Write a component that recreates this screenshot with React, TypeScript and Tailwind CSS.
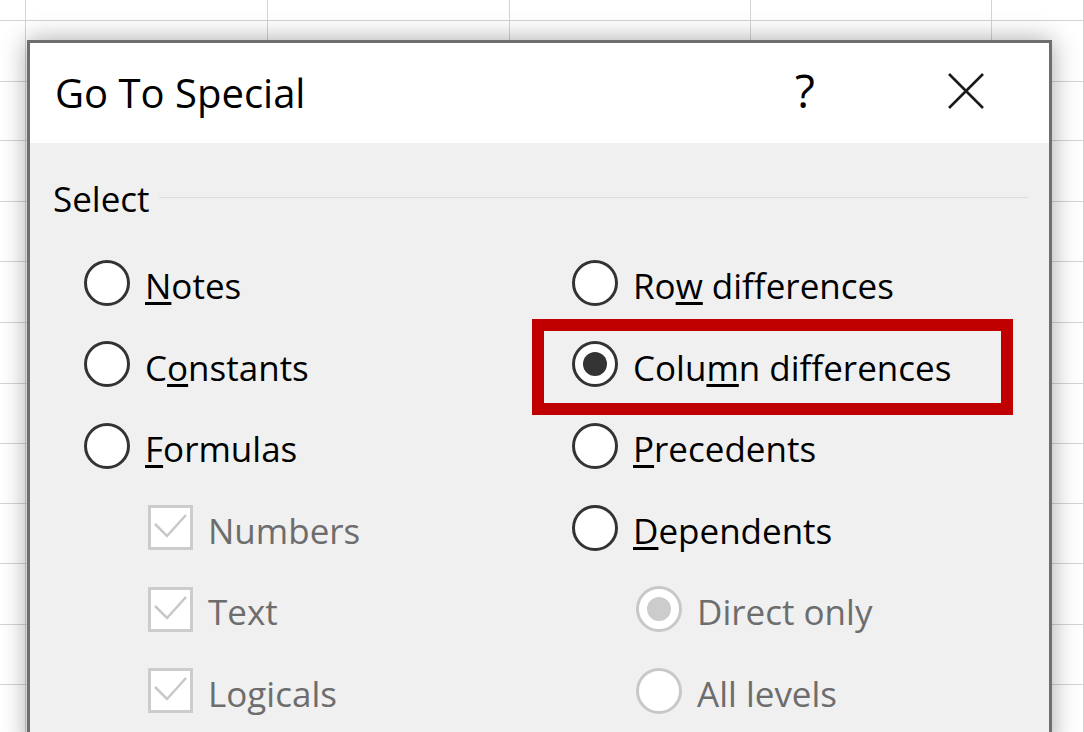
import clsx from 'clsx'

type Opt = {
  pre: string
  key?: string
  post?: string
  kind: 'radio' | 'check'
  checked?: boolean
  disabled?: boolean
  indent?: boolean
  marked?: boolean
}

const options: Opt[] = [
  { pre: '', key: 'N', post: 'otes', kind: 'radio' },
  { pre: 'Ro', key: 'w', post: ' differences', kind: 'radio' },
  { pre: 'C', key: 'o', post: 'nstants', kind: 'radio' },
  { pre: 'Colu', key: 'm', post: 'n differences', kind: 'radio', checked: true, marked: true },
  { pre: '', key: 'F', post: 'ormulas', kind: 'radio' },
  { pre: '', key: 'P', post: 'recedents', kind: 'radio' },
  { pre: 'Numbers', kind: 'check', checked: true, disabled: true, indent: true },
  { pre: '', key: 'D', post: 'ependents', kind: 'radio' },
  { pre: 'Text', kind: 'check', checked: true, disabled: true, indent: true },
  { pre: 'Direct only', kind: 'radio', checked: true, disabled: true, indent: true },
  { pre: 'Logicals', kind: 'check', checked: true, disabled: true, indent: true },
  { pre: 'All levels', kind: 'radio', disabled: true, indent: true },
]

function Radio({ checked, disabled }: { checked?: boolean; disabled?: boolean }) {
  return (
    <span
      className={clsx(
        'flex h-[46px] w-[46px] shrink-0 items-center justify-center rounded-full border-[3px] bg-white',
        disabled ? 'border-[#c8c8c8]' : 'border-[#333333]'
      )}
    >
      {checked && (
        <span className={clsx('h-[24px] w-[24px] rounded-full', disabled ? 'bg-[#cccccc]' : 'bg-[#333333]')} />
      )}
    </span>
  )
}

function Check() {
  return (
    <span className="flex h-[45px] w-[45px] shrink-0 items-center justify-center border-[3px] border-[#cccccc] bg-white">
      <svg width="39" height="39" viewBox="0 0 39 39" fill="none">
        <polyline points="4,16 16,28 35,7" stroke="#c8c8c8" strokeWidth="2.5" />
      </svg>
    </span>
  )
}

function Option({ opt }: { opt: Opt }) {
  return (
    <div className={clsx('relative flex h-[81.6px] items-center', opt.indent && 'pl-[64px]')}>
      {opt.marked && (
        <div className="absolute -left-[40px] -top-[5px] h-[96px] w-[481px] border-[12px] border-[#c00000]" />
      )}
      {opt.kind === 'radio' ? <Radio checked={opt.checked} disabled={opt.disabled} /> : <Check />}
      <span
        className={clsx(
          'ml-[15px] mt-[7px] whitespace-pre text-[35px]',
          opt.disabled ? 'text-[#6d6d6d]' : 'text-black'
        )}
      >
        {opt.pre}
        {opt.key && <span className="underline decoration-3 underline-offset-3">{opt.key}</span>}
        {opt.post}
      </span>
    </div>
  )
}

export default function App() {
  const cells = Array.from({ length: 78 }, (_, i) => i)

  return (
    <div className="relative h-[732px] w-[1084px] overflow-hidden bg-white font-['Open_Sans',sans-serif]">
      {/* spreadsheet behind the dialog */}
      <div className="grid grid-cols-[26px_242px_242px_241px_241px_1fr] grid-rows-[21px_61px_59px_61px_60px_61px_61px_60px_60px_60px_61px_60px_60px]">
        {cells.map((i) => (
          <div key={i} className="border-b border-r border-[#d4d4d4]" />
        ))}
      </div>

      {/* dialog */}
      <div className="absolute left-[27px] top-[40px] h-[710px] w-[1025px] border-[3px] border-[#6e6e6e] bg-[#f0f0f0] shadow-[0_0_24px_rgba(0,0,0,0.35)]">
        <div className="flex h-[100px] items-center bg-white pl-[25px] pr-[65px]">
          <span className="flex-1 text-[40px] text-black">Go To Special</span>
          <span className="mb-[6px] w-[48px] text-center text-[46px] text-black">?</span>
          <svg className="mb-[5px] ml-[119px]" width="36" height="36" viewBox="0 0 36 36">
            <path d="M1 1 L35 35 M35 1 L1 35" stroke="#1a1a1a" strokeWidth="2.6" />
          </svg>
        </div>

        <div className="pl-[23px] pr-[21px] pt-[33px]">
          <div className="flex h-[46px] items-center">
            <span className="text-[35px] text-black">Select</span>
            <div className="mb-[4px] ml-[9px] h-px flex-1 bg-[#dcdcdc]" />
          </div>

          <div className="ml-[31px] mt-[20px] grid grid-cols-[488px_1fr]">
            {options.map((opt) => (
              <Option key={opt.pre + (opt.key ?? '')} opt={opt} />
            ))}
          </div>
        </div>
      </div>
    </div>
  )
}
